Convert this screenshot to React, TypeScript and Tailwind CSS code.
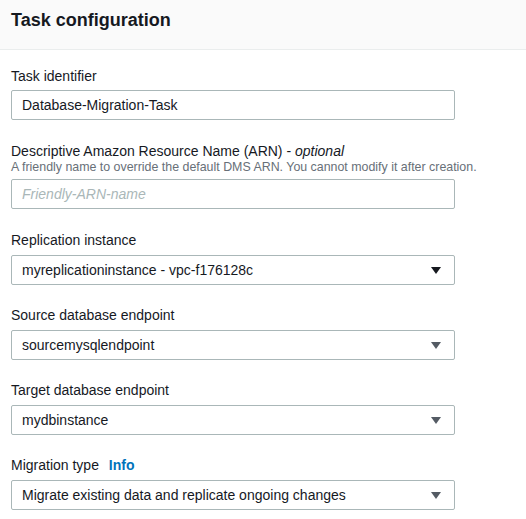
import React from "react";

const font = { fontFamily: '"Liberation Sans", Arial, sans-serif' };

function Arrow({ dark }: { dark?: boolean }) {
  return (
    <svg width="10" height="7" viewBox="0 0 10 7" className={dark ? "text-[#16191f]" : "text-[#545b64]"}>
      <path d="M0 0h10L5 7z" fill="currentColor" />
    </svg>
  );
}

function Select({ value, dark }: { value: string; dark?: boolean }) {
  return (
    <div className="flex h-[30px] w-[444px] items-center justify-between rounded-[2px] border border-[#aab7b8] bg-white pl-[10px] pr-[13px] text-[14px] text-[#16191f]">
      <span>{value}</span>
      <Arrow dark={dark} />
    </div>
  );
}

function Label({ children }: { children: React.ReactNode }) {
  return <div className="text-[14px] leading-[22px] text-[#16191f]">{children}</div>;
}

export default function App() {
  return (
    <div className="min-h-[519px] w-[526px] bg-white" style={font}>
      {/* Header */}
      <div className="flex h-[50px] items-center border-b border-[#eaeded] bg-[#fafafa] px-[11px] pb-[8px]">
        <h2 className="text-[18px] font-bold text-[#16191f]">Task configuration</h2>
      </div>

      <div className="px-[11px] pt-[15px]">
        <Label>Task identifier</Label>
        <input
          readOnly
          value="Database-Migration-Task"
          className="mt-[3px] h-[30px] w-[444px] rounded-[2px] border border-[#aab7b8] bg-white px-[10px] text-[14px] text-[#16191f] outline-none"
          style={font}
        />

        <div className="mt-[20px]">
          <Label>
            Descriptive Amazon Resource Name (ARN) - <i>optional</i>
          </Label>
          <div className="-mt-[3px] text-[12.4px] leading-[16px] text-[#687078]">
            A friendly name to override the default DMS ARN. You cannot modify it after creation.
          </div>
          <input
            readOnly
            placeholder="Friendly-ARN-name"
            className="mt-[4px] h-[30px] w-[444px] rounded-[2px] border border-[#aab7b8] bg-white px-[10px] text-[14px] italic text-[#16191f] outline-none placeholder:text-[#aab7b8]"
            style={font}
          />
        </div>

        <div className="mt-[20px] flex flex-col gap-[4px]">
          <Label>Replication instance</Label>
          <Select value="myreplicationinstance - vpc-f176128c" dark />
        </div>

        <div className="mt-[19px] flex flex-col gap-[4px]">
          <Label>Source database endpoint</Label>
          <Select value="sourcemysqlendpoint" />
        </div>

        <div className="mt-[19px] flex flex-col gap-[4px]">
          <Label>Target database endpoint</Label>
          <Select value="mydbinstance" />
        </div>

        <div className="mt-[19px] flex flex-col gap-[4px]">
          <Label>
            Migration type <span className="ml-[6px] font-bold text-[#0073bb]">Info</span>
          </Label>
          <Select value="Migrate existing data and replicate ongoing changes" />
        </div>
      </div>
    </div>
  );
}
